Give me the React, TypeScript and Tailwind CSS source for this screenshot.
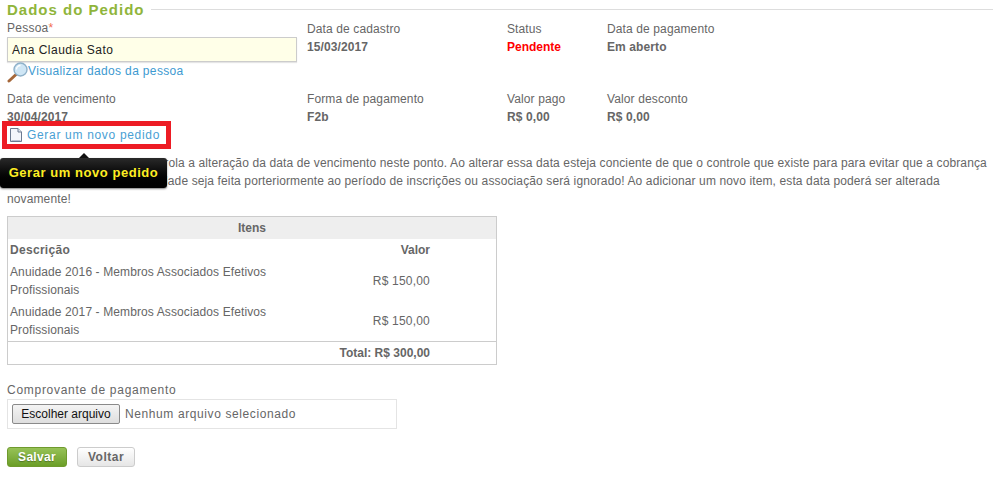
const items = [
  { id: 1, name: "Anuidade 2016 - Membros Associados Efetivos Profissionais", value: "R$ 150,00" },
  { id: 2, name: "Anuidade 2017 - Membros Associados Efetivos Profissionais", value: "R$ 150,00" },
];

function Field({ label, value, className = "" }: { label: string; value: string; className?: string }) {
  return (
    <div className={className}>
      <p className="h-[18px] text-[12px] leading-[18px] tracking-[0.12px]">{label}</p>
      <p className="h-[18px] text-[12px] font-bold leading-[18px] tracking-[0.1px]">{value}</p>
    </div>
  );
}

function MagnifierIcon() {
  return (
    <svg width="21" height="21" viewBox="0 0 21 21" className="shrink-0">
      <path d="M9 12.5 L2 19" stroke="#a5673a" strokeWidth="3" strokeLinecap="round" />
      <circle cx="13.5" cy="7.5" r="6.5" fill="#cfe6f5" stroke="#8fb1c9" strokeWidth="1.4" />
      <path d="M9.5 7.5a4 4 0 0 1 4-4" stroke="#ffffff" strokeWidth="1.4" fill="none" />
    </svg>
  );
}

function PageIcon() {
  return (
    <svg width="12" height="14" viewBox="0 0 12 14" className="shrink-0">
      <path d="M0.5 0.5 H8 L11.5 4 V13.5 H0.5 Z" fill="#f4f6fb" stroke="#6d7a90" />
      <path d="M8 0.5 V4 H11.5" fill="#dfe5f0" stroke="#6d7a90" />
      <path d="M1.5 12.5 H10.5" stroke="#b5bed0" />
    </svg>
  );
}

export default function App() {
  return (
    <div className="h-[477px] w-[993px] overflow-hidden bg-white pl-[7px] font-['Liberation_Sans',Arial,sans-serif] text-[12px] text-[#666666]">
      <div className="flex h-[19px] items-center gap-[6px]">
        <h1 className="text-[15px] font-bold leading-[19px] tracking-[1px] text-[#8fb53b]">Dados do Pedido</h1>
        <div className="h-px flex-1 bg-[#dddddd]" />
      </div>

      <div className="flex h-[71px]">
        <div className="w-[300px]">
          <p className="h-[18px] text-[12px] leading-[18px] tracking-[0.25px]">
            Pessoa<span className="text-[#f26c4f]">*</span>
          </p>
          <div className="flex h-[25px] w-[290px] items-center border border-[#cccccc] bg-[#ffffe8] px-[4px] text-[12px] tracking-[0.5px] text-[#222222] shadow-[0_1px_1px_rgba(0,0,0,0.1)]">
            Ana Claudia Sato
          </div>
          <a className="flex h-[21px] items-start text-[12px] leading-[18px] tracking-[0.35px] text-[#3d9ad1]">
            <MagnifierIcon />
            Visualizar dados da pessoa
          </a>
        </div>
        <Field className="w-[200px] pt-px" label="Data de cadastro" value="15/03/2017" />
        <div className="w-[100px] pt-px">
          <p className="h-[18px] leading-[18px] tracking-[0.12px]">Status</p>
          <p className="h-[18px] font-bold leading-[18px] text-[#ff0000]">Pendente</p>
        </div>
        <Field className="pt-px" label="Data de pagamento" value="Em aberto" />
      </div>

      <div className="flex h-[36px]">
        <Field className="w-[300px]" label="Data de vencimento" value="30/04/2017" />
        <Field className="w-[200px]" label="Forma de pagamento" value="F2b" />
        <Field className="w-[100px]" label="Valor pago" value="R$ 0,00" />
        <Field label="Valor desconto" value="R$ 0,00" />
      </div>

      <div className="relative -mt-[5px]">
        <a className="-ml-[5px] flex h-[28px] w-[169px] items-center gap-[5px] border-[5px] border-[#ed1c24] pl-[3px] text-[12px] tracking-[0.68px] text-[#4a9fd4]">
          <PageIcon />
          Gerar um novo pedido
        </a>
        <div className="absolute left-[-7px] top-[37px] z-10 flex h-[30px] w-[167px] items-center justify-center rounded-[3px] bg-gradient-to-b from-[#2a2a2a] to-[#000000] text-[13px] font-bold tracking-[0.55px] text-[#ffee22] shadow-[0_1px_2px_rgba(0,0,0,0.5)]">
          Gerar um novo pedido
          <span className="absolute left-[79px] top-[-5px] h-0 w-0 border-x-[5px] border-b-[5px] border-x-transparent border-b-[#111111]" />
        </div>
      </div>

      <p className="mt-[5px] text-[12px] leading-[18px] tracking-[0.12px]">
        Atenção: O sistema não controla a alteração da data de vencimento neste ponto. Ao alterar essa data esteja conciente de que o controle que existe para para evitar que a cobrança de uma anuidade ou de atividade seja feita porteriormente ao período de inscrições ou associação será ignorado! Ao adicionar um novo item, esta data poderá ser alterada novamente!
      </p>

      <div className="mt-[8px] w-[490px] border border-[#cccccc]">
        <div className="flex h-[22px] items-center justify-center bg-[#eeeeee] font-bold">Itens</div>
        <div className="flex h-[22px] items-center font-bold">
          <span className="w-[280px] pl-[2px] tracking-[0.3px]">Descrição</span>
          <span className="w-[142px] text-right">Valor</span>
        </div>
        {items.map((item) => (
          <div key={item.id} className="flex h-[40px] items-center leading-[18px]">
            <span className="w-[280px] pl-[2px] tracking-[0.11px]">{item.name}</span>
            <span className="w-[142px] text-right tracking-[0.2px]">{item.value}</span>
          </div>
        ))}
        <div className="flex h-[23px] items-center border-t border-[#cccccc] font-bold">
          <span className="w-[422px] text-right">Total: R$ 300,00</span>
        </div>
      </div>

      <p className="mt-[16px] h-[18px] text-[12px] leading-[18px] tracking-[0.72px]">Comprovante de pagamento</p>
      <div className="flex h-[30px] w-[390px] items-center gap-[5px] border border-[#e4e4e4] px-[4px]">
        <button className="h-[20px] w-[108px] rounded-[2px] border border-[#8a8a8a] bg-gradient-to-b from-[#f4f4f4] to-[#dedede] text-[12px] text-[#111111]">
          Escolher arquivo
        </button>
        <span className="tracking-[0.6px]">Nenhum arquivo selecionado</span>
      </div>

      <div className="mt-[18px] flex gap-[10px]">
        <button className="h-[20px] w-[60px] rounded-[3px] border border-[#6f9a2d] bg-gradient-to-b from-[#97c257] to-[#6b9e26] text-[12px] font-bold tracking-[0.3px] text-white [text-shadow:0_1px_1px_rgba(0,0,0,0.3)]">
          Salvar
        </button>
        <button className="h-[20px] w-[58px] rounded-[3px] border border-[#cccccc] bg-gradient-to-b from-[#ffffff] to-[#e6e6e6] text-[12px] font-bold tracking-[0.5px] text-[#666666]">
          Voltar
        </button>
      </div>
    </div>
  );
}
